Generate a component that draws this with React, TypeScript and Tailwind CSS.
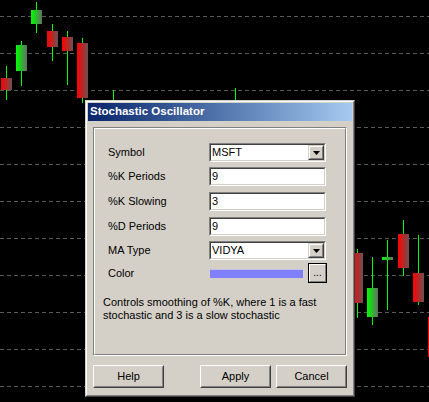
import React from "react";

type Candle = { x: number; top: number; bottom: number; wx: number; wt: number; wb: number; up: boolean };

const candles: Candle[] = [
  { x: 1, top: 78, bottom: 90, wx: 6, wt: 66, wb: 100, up: false },
  { x: 16, top: 45, bottom: 71, wx: 21, wt: 41, wb: 86, up: true },
  { x: 31, top: 10, bottom: 24, wx: 36, wt: 2, wb: 33, up: true },
  { x: 47, top: 31, bottom: 47, wx: 52, wt: 24, wb: 61, up: false },
  { x: 62, top: 37, bottom: 51, wx: 67, wt: 31, wb: 85, up: false },
  { x: 77, top: 43, bottom: 98, wx: 82, wt: 38, wb: 103, up: false },
  { x: 352, top: 253, bottom: 303, wx: 357, wt: 249, wb: 318, up: false },
  { x: 367, top: 288, bottom: 317, wx: 372, wt: 257, wb: 325, up: true },
  { x: 382, top: 257, bottom: 260, wx: 387, wt: 240, wb: 310, up: true },
  { x: 398, top: 234, bottom: 268, wx: 403, wt: 220, wb: 276, up: false },
  { x: 413, top: 273, bottom: 302, wx: 418, wt: 235, wb: 305, up: false },
  { x: 428, top: 317, bottom: 357, wx: 433, wt: 300, wb: 370, up: false },
];

const gridYs = [16, 53, 90, 127, 164, 201, 238, 275, 312, 349, 386];

function Chart() {
  return (
    <svg className="absolute inset-0" width={429} height={402} viewBox="0 0 429 402">
      <defs>
        <linearGradient id="gRed" x1="0" y1="0" x2="1" y2="0">
          <stop offset="0" stopColor="#ff0000" />
          <stop offset="1" stopColor="#6e5050" />
        </linearGradient>
        <linearGradient id="gGreen" x1="0" y1="0" x2="1" y2="0">
          <stop offset="0" stopColor="#00ff00" />
          <stop offset="1" stopColor="#607060" />
        </linearGradient>
      </defs>
      <rect x={0} y={0} width={429} height={402} fill="#000000" />
      {gridYs.map((y) => (
        <line key={y} x1={0} x2={429} y1={y + 0.5} y2={y + 0.5} stroke="#5a5a5a" strokeWidth={1} strokeDasharray="4 3" />
      ))}
      <rect x={113} y={90} width={1} height={30} fill="#00ff00" />
      <rect x={235} y={88} width={1} height={30} fill="#00ff00" />
      {candles.map((c, i) => (
        <g key={i}>
          <rect x={c.wx} y={c.wt} width={1} height={c.wb - c.wt} fill="#00ff00" />
          <rect x={c.x} y={c.top} width={11} height={c.bottom - c.top} fill={c.up ? "url(#gGreen)" : "url(#gRed)"} />
        </g>
      ))}
    </svg>
  );
}

function Sunken({ children, className = "" }: { children: React.ReactNode; className?: string }) {
  return (
    <div className={"border border-t-[#808080] border-l-[#808080] border-r-white border-b-white " + className}>
      <div className="h-full border border-t-[#404040] border-l-[#404040] border-r-[#d4d0c8] border-b-[#d4d0c8] bg-white flex items-center">
        {children}
      </div>
    </div>
  );
}

function Arrow() {
  return (
    <div className="w-[16px] h-[15px] border border-t-[#d4d0c8] border-l-[#d4d0c8] border-r-[#404040] border-b-[#404040] bg-[#d4d0c8]">
      <div className="h-full border border-t-white border-l-white border-r-[#808080] border-b-[#808080] flex items-center justify-center">
        <svg width="7" height="4" viewBox="0 0 7 4">
          <path d="M0 0H7L3.5 4Z" fill="#000" />
        </svg>
      </div>
    </div>
  );
}

function Combo({ value, className = "" }: { value: string; className?: string }) {
  return (
    <Sunken className={"w-[117px] h-[19px] " + className}>
      <span className="flex-1 pl-[1px] text-[11px] leading-none text-black">{value}</span>
      <div className="pr-0">
        <Arrow />
      </div>
    </Sunken>
  );
}

function Edit({ value, className = "" }: { value: string; className?: string }) {
  return (
    <Sunken className={"w-[117px] h-[19px] " + className}>
      <span className="pl-[1px] text-[11px] leading-none text-black">{value}</span>
    </Sunken>
  );
}

function Row({ label, children, className = "" }: { label: string; children: React.ReactNode; className?: string }) {
  return (
    <div className={"flex items-center " + className}>
      <div className="w-[101px] ml-[5px] text-[11px] leading-none text-black">{label}</div>
      {children}
    </div>
  );
}

function Button({ label }: { label: string }) {
  return (
    <div className="w-[71px] h-[23px] border border-t-white border-l-white border-r-[#404040] border-b-[#404040] bg-[#d4d0c8]">
      <div className="h-full border border-t-[#d4d0c8] border-l-[#d4d0c8] border-r-[#808080] border-b-[#808080] flex items-center justify-center text-[11px] text-black">
        {label}
      </div>
    </div>
  );
}

export default function App() {
  return (
    <div className="relative w-[429px] h-[402px] overflow-hidden bg-black font-['Liberation_Sans',Arial,sans-serif]">
      <Chart />
      <div className="absolute left-[85px] top-[100px] w-[270px] h-[297px] border border-t-[#d4d0c8] border-l-[#d4d0c8] border-r-[#404040] border-b-[#404040]">
        <div className="h-full border border-t-white border-l-white border-r-[#808080] border-b-[#808080] bg-[#d4d0c8] p-px flex flex-col">
          <div className="h-[18px] flex items-center pl-[2px] bg-gradient-to-r from-[#0a246a] to-[#a6caf0]">
            <span className="text-white font-bold text-[11.5px] leading-none">Stochastic Oscillator</span>
          </div>
          <div className="mt-[6px] mx-[5px] h-[229px] border border-t-[#808080] border-l-[#808080] border-r-white border-b-white">
            <div className="h-full border border-t-white border-l-white border-r-[#808080] border-b-[#808080] pl-[8px] pt-[14px]">
              <Row label="Symbol">
                <Combo value="MSFT" />
              </Row>
              <Row label="%K Periods" className="mt-[5px]">
                <Edit value="9" />
              </Row>
              <Row label="%K Slowing" className="mt-[6px]">
                <Edit value="3" />
              </Row>
              <Row label="%D Periods" className="mt-[6px]">
                <Edit value="9" />
              </Row>
              <Row label="MA Type" className="mt-[5px]">
                <Combo value="VIDYA" />
              </Row>
              <Row label="Color" className="mt-[3px]">
                <div className="flex items-center h-[20px]">
                  <div className="ml-[1px] w-[93px] h-[9px] bg-[#8080ff] border-t border-t-[#c0c0e8]" />
                  <div className="ml-[5px] w-[19px] h-[20px] border border-black bg-[#d4d0c8]">
                    <div className="h-full border border-t-white border-l-white border-r-[#808080] border-b-[#808080] flex items-end justify-center pb-[3px] text-[10px] leading-none text-black">
                      ...
                    </div>
                  </div>
                </div>
              </Row>
              <div className="mt-[13px] text-[11px] leading-[13px] text-black">
                Controls smoothing of %K, where 1 is a fast
                <br />
                stochastic and 3 is a slow stochastic
              </div>
            </div>
          </div>
          <div className="mt-[9px] flex pl-[5px] pr-[5px]">
            <Button label="Help" />
            <div className="flex-1" />
            <Button label="Apply" />
            <div className="w-[5px]" />
            <Button label="Cancel" />
          </div>
        </div>
      </div>
    </div>
  );
}
